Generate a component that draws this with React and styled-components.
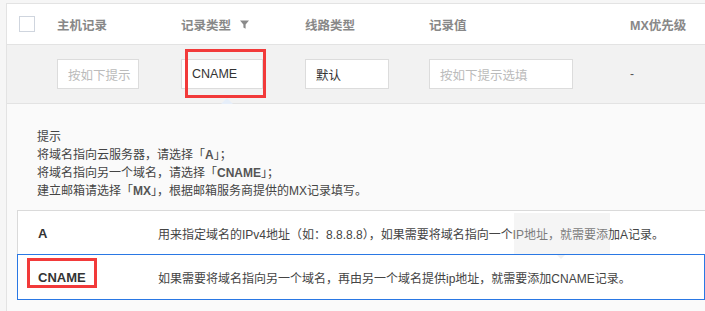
import React from 'react';
import styled, { createGlobalStyle } from 'styled-components';

const GlobalStyle = createGlobalStyle`
  html, body {
    margin: 0;
    padding: 0;
    background: #f6f6f6;
    font-family: "Liberation Sans", "Noto Sans CJK SC", sans-serif;
    font-size: 12px;
    color: #444;
  }
  * { box-sizing: border-box; }
`;

const Page = styled.div`
  padding: 3px 0 0 6px;
  height: 311px;
  overflow: hidden;
`;

const Table = styled.div`
  border-top: 1px solid #e3e3e3;
  border-left: 1px solid #e3e3e3;
  background: #fff;
  min-height: 310px;
`;

const Row = styled.div`
  display: grid;
  grid-template-columns: 50px 124px 124px 124px 201px 1fr;
  align-items: center;
  height: ${p => p.h}px;
  background: ${p => p.bg || '#fff'};
  border-bottom: 1px solid #e3e3e3;
`;

const Check = styled.span`
  display: block;
  width: 16px;
  height: 16px;
  margin-left: 12px;
  border: 1px solid #cfd5de;
  background: #fff;
`;

const Th = styled.div`
  font-size: 12.5px;
  font-weight: bold;
  color: #888;
  display: flex;
  align-items: center;
  gap: 9px;
`;

const Cell = styled.div`
  position: relative;
  display: flex;
  align-items: center;
`;

const Input = styled.div`
  width: ${p => p.w}px;
  height: 30px;
  border: 1px solid #dcdcdc;
  background: #fff;
  padding-left: 10px;
  display: flex;
  align-items: center;
  font-size: 12.5px;
  color: ${p => (p.placeholder ? '#bbb' : '#333')};
`;

const RedBox = styled.span`
  position: absolute;
  left: 4px;
  top: -10px;
  width: 81px;
  height: 49px;
  border: 3px solid #f23a3a;
  pointer-events: none;
`;

const Caret = styled.span`
  position: absolute;
  left: 40px;
  top: 39px;
  width: 0;
  height: 0;
  border-left: 6px solid transparent;
  border-right: 6px solid transparent;
  border-bottom: 6px solid #e6eef9;
`;

const Dash = styled.span`
  color: #555;
  font-size: 12px;
`;

const Panel = styled.div`
  background: #fafafa;
  padding: 24px 0 0 10px;
  height: 209px;
`;

const Hint = styled.div`
  padding-left: 20px;
  line-height: 18px;
  font-size: 12px;
  color: #444;
  margin-bottom: 10px;

  b {
    color: #555;
  }
`;

const Options = styled.div`
  background: #fff;
  border-top: 1px solid #dadada;
  border-left: 1px solid #dadada;
`;

const Option = styled.div`
  position: relative;
  display: grid;
  grid-template-columns: 120px 1fr;
  align-items: center;
  height: ${p => p.h}px;
  padding-left: 20px;
  margin-left: -1px;
  border: 1px solid ${p => (p.active ? '#2a78e4' : 'transparent')};
  border-left-color: ${p => (p.active ? '#2a78e4' : '#dadada')};
  margin-top: ${p => (p.active ? '-1px' : '0')};
`;

const Key = styled.span`
  position: relative;
  font-weight: bold;
  font-size: 13px;
  color: #333;
  justify-self: start;
`;

const KeyMark = styled.span`
  position: absolute;
  left: -11px;
  top: -12px;
  width: 70px;
  height: 30px;
  border: 3px solid #f23a3a;
`;

const Desc = styled.span`
  font-size: 12px;
  color: #444;
  white-space: nowrap;
`;

const Ghost = styled.span`
  position: absolute;
  left: 496px;
  top: 1px;
  width: 96px;
  height: 41px;
  background: rgba(225, 225, 225, 0.35);

  &::after {
    content: '';
    position: absolute;
    left: 42px;
    bottom: -5px;
    border-left: 5px solid transparent;
    border-right: 5px solid transparent;
    border-top: 5px solid rgba(225, 225, 225, 0.45);
  }
`;

const Funnel = () => (
  <svg width="9" height="9" viewBox="0 0 9 9">
    <path d="M0 0.5h9L5.6 4.6v4.2L3.4 7.6V4.6z" fill="#8a8a8a" />
  </svg>
);

export default function App() {
  return (
    <>
      <GlobalStyle />
      <Page>
        <Table>
          <Row h={41}>
            <Check />
            <Th>主机记录</Th>
            <Th>记录类型<Funnel /></Th>
            <Th>线路类型</Th>
            <Th>记录值</Th>
            <Th>MX优先级</Th>
          </Row>
          <Row h={59} bg="#f2f2f2">
            <span />
            <Cell><Input w={82} placeholder>按如下提示</Input></Cell>
            <Cell>
              <Input w={82}>CNAME</Input>
              <RedBox />
              <Caret />
            </Cell>
            <Cell><Input w={84}>默认</Input></Cell>
            <Cell><Input w={144} placeholder>按如下提示选填</Input></Cell>
            <Cell><Dash>-</Dash></Cell>
          </Row>
          <Panel>
            <Hint>
              提示<br />
              将域名指向云服务器，请选择「<b>A</b>」；<br />
              将域名指向另一个域名，请选择「<b>CNAME</b>」；<br />
              建立邮箱请选择「<b>MX</b>」，根据邮箱服务商提供的MX记录填写。
            </Hint>
            <Options>
              <Option h={44}>
                <Key>A</Key>
                <Desc>用来指定域名的IPv4地址（如：8.8.8.8），如果需要将域名指向一个IP地址，就需要添加A记录。</Desc>
                <Ghost />
              </Option>
              <Option h={46} active>
                <Key>CNAME<KeyMark /></Key>
                <Desc>如果需要将域名指向另一个域名，再由另一个域名提供ip地址，就需要添加CNAME记录。</Desc>
              </Option>
            </Options>
          </Panel>
        </Table>
      </Page>
    </>
  );
}
